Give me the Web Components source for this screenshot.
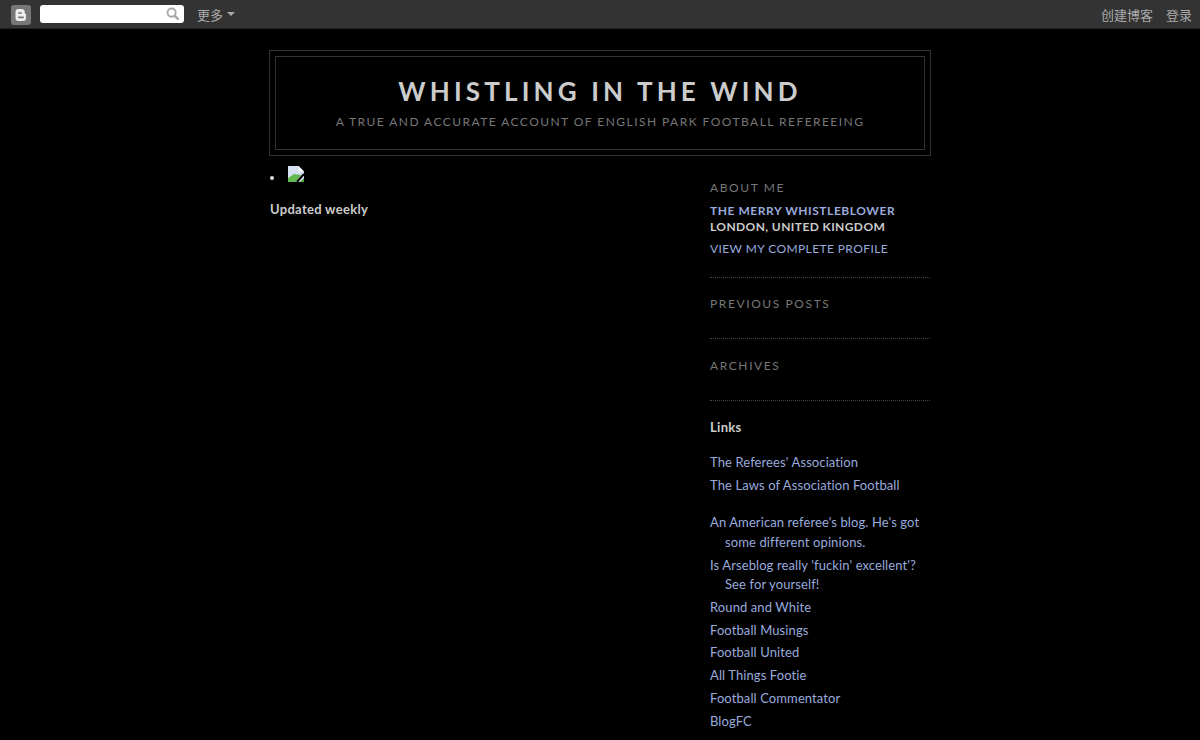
<!DOCTYPE html>
<html>
<head>
<meta charset="utf-8">
<title>Whistling in the Wind</title>
<style>
  html, body { margin: 0; background: #000; height: 100%; overflow: hidden; }
  body { color: #ccc; font: 13px Lato, "Liberation Sans", sans-serif; }
</style>
</head>
<body>
<blog-navbar></blog-navbar>
<blog-page>
  <blog-header slot="header" title-text="Whistling in the Wind" description="A true and accurate account of English park football refereeing"></blog-header>
  <blog-post slot="main">Updated weekly</blog-post>
  <profile-box slot="side" name="The Merry Whistleblower" location="London, United Kingdom" link="View my complete profile"></profile-box>
  <side-section slot="side" heading="Previous Posts" top="18" bottom="26"></side-section>
  <side-section slot="side" heading="Archives" top="19" bottom="26"></side-section>
  <link-group slot="side" heading="Links">
    <blog-link>The Referees' Association</blog-link>
    <blog-link>The Laws of Association Football</blog-link>
    <blog-link top="14.7">An American referee's blog. He's got some different opinions.</blog-link>
    <blog-link>Is Arseblog really 'fuckin' excellent'? See for yourself!</blog-link>
    <blog-link>Round and White</blog-link>
    <blog-link>Football Musings</blog-link>
    <blog-link>Football United</blog-link>
    <blog-link>All Things Footie</blog-link>
    <blog-link>Football Commentator</blog-link>
    <blog-link>BlogFC</blog-link>
  </link-group>
</blog-page>
<script>
const sansStack = 'Lato, "Liberation Sans", sans-serif';

class BlogNavbar extends HTMLElement {
  constructor() {
    super();
    this.attachShadow({ mode: "open" });
    this.shadowRoot.innerHTML = `
      <style>
        :host {
          display: flex;
          align-items: center;
          height: 28px;
          padding: 0 8px 0 11px;
          background: #333;
          border-bottom: 1px solid #222;
          color: #aaa;
          font: 13px "Noto Sans CJK SC", sans-serif;
        }
        .logo { width: 20px; height: 20px; margin: 2px 9px 0 0; }
        .search {
          display: flex;
          justify-content: flex-end;
          align-items: center;
          box-sizing: border-box;
          width: 144px;
          height: 18px;
          padding-right: 4px;
          background: #fff;
          border-radius: 3px;
          margin-right: 13px;
        }
        .more { display: flex; align-items: center; gap: 4px; }
        .more i { border: 4px solid transparent; border-top-color: #aaa; border-bottom: 0; }
        .right { margin-left: auto; display: flex; gap: 13px; }
      </style>
      <svg class="logo" viewBox="0 0 20 20">
        <rect width="20" height="20" rx="3" fill="#777"/>
        <path d="M7.5 4h3.2a3 3 0 0 1 3 3v.8c0 .6.5 1 1 1.1.2.1.3.3.3.6v3.5a3 3 0 0 1-3 3H7.5a3 3 0 0 1-3-3V7a3 3 0 0 1 3-3z" fill="#eee"/>
        <rect x="7" y="7.2" width="4" height="1.6" rx=".8" fill="#777"/>
        <rect x="7" y="11.6" width="6" height="1.6" rx=".8" fill="#777"/>
      </svg>
      <div class="search">
        <svg width="14" height="14" viewBox="0 0 15 15" fill="none" stroke="#a8a8a8">
          <circle cx="6" cy="6" r="4.4" stroke-width="2"/>
          <path d="M9 9l4.5 4.5" stroke-width="2.6"/>
        </svg>
      </div>
      <div class="more">更多<i></i></div>
      <div class="right"><span>创建博客</span><span>登录</span></div>`;
  }
}

class BlogPage extends HTMLElement {
  constructor() {
    super();
    this.attachShadow({ mode: "open" });
    this.shadowRoot.innerHTML = `
      <style>
        :host { display: block; width: 662px; margin: 21px auto 0; }
        .columns { display: flex; justify-content: space-between; padding: 0 1px; margin-top: 10px; }
        .main { width: 410px; }
        .side { width: 220px; }
      </style>
      <slot name="header"></slot>
      <div class="columns">
        <div class="main"><slot name="main"></slot></div>
        <div class="side"><slot name="side"></slot></div>
      </div>`;
  }
}

class BlogHeader extends HTMLElement {
  constructor() {
    super();
    this.attachShadow({ mode: "open" });
    this.shadowRoot.innerHTML = `
      <style>
        :host { display: block; border: 1px solid #333; padding: 5px; height: 94px; }
        .inner {
          height: 92px;
          border: 1px solid #333;
          text-align: center;
          text-transform: uppercase;
          font-family: ${sansStack};
        }
        h1 {
          margin: 19px 0 0;
          color: #ccc;
          font-size: 26px;
          line-height: 30px;
          font-weight: 700;
          letter-spacing: 4.15px;
        }
        p {
          margin: 8px 0 0;
          color: #777;
          font-size: 12px;
          line-height: 16px;
          letter-spacing: 1.45px;
        }
      </style>
      <div class="inner">
        <h1>${this.getAttribute("title-text")}</h1>
        <p>${this.getAttribute("description")}</p>
      </div>`;
  }
}

class BlogPost extends HTMLElement {
  constructor() {
    super();
    this.attachShadow({ mode: "open" });
    this.shadowRoot.innerHTML = `
      <style>
        :host { display: block; color: #ccc; font: 700 13px/18px ${sansStack}; letter-spacing: .3px; }
        ul { margin: 0; padding: 0; list-style: none; height: 34px; }
        li { display: flex; }
        li::before {
          content: "";
          width: 4px;
          height: 4px;
          margin: 9.5px 14px 0 0;
          border-radius: 50%;
          background: #ddd;
        }
        svg { display: block; }
        p { margin: 0; }
      </style>
      <ul><li><svg width="16" height="16" viewBox="0 0 16 16">
        <path d="M0 0h10.5L16 5.5V16H0z" fill="#d6e0f0"/>
        <path d="M10.5 0v5.5H16z" fill="#fff"/>
        <path d="M0 16v-4l6-4 7 1-5 7z" fill="#63b84f"/>
        <path d="M16 8l-7 8" stroke="#000" stroke-width="2" fill="none"/>
        <path d="M12 16l4-4v4z" fill="#4aa53f"/>
      </svg></li></ul>
      <p><slot></slot></p>`;
  }
}

const sideHeading = `
  h2 {
    margin: 0;
    color: #777;
    font: 400 12px/16px ${sansStack};
    letter-spacing: 1.6px;
    text-transform: uppercase;
  }`;

class ProfileBox extends HTMLElement {
  constructor() {
    super();
    this.attachShadow({ mode: "open" });
    this.shadowRoot.innerHTML = `
      <style>
        :host {
          display: block;
          padding: 14px 0 20px;
          border-bottom: 1px dotted #444;
          font-size: 12px;
          text-transform: uppercase;
        }
        ${sideHeading}
        .who { margin-top: 7px; line-height: 16px; font-weight: 700; color: #ccc; letter-spacing: .4px; }
        .name { color: #99aadd; letter-spacing: .55px; }
        .link { margin-top: 6px; line-height: 16px; color: #99aadd; letter-spacing: .4px; }
      </style>
      <h2>About Me</h2>
      <div class="who">
        <div class="name">${this.getAttribute("name")}</div>
        <div>${this.getAttribute("location")}</div>
      </div>
      <div class="link">${this.getAttribute("link")}</div>`;
  }
}

class SideSection extends HTMLElement {
  constructor() {
    super();
    this.attachShadow({ mode: "open" });
    const top = this.getAttribute("top");
    const bottom = this.getAttribute("bottom");
    this.shadowRoot.innerHTML = `
      <style>
        :host { display: block; padding: ${top}px 0 ${bottom}px; border-bottom: 1px dotted #444; }
        ${sideHeading}
      </style>
      <h2>${this.getAttribute("heading")}</h2>`;
  }
}

class LinkGroup extends HTMLElement {
  constructor() {
    super();
    this.attachShadow({ mode: "open" });
    this.shadowRoot.innerHTML = `
      <style>
        :host { display: block; padding-top: 17px; }
        h3 { margin: 0 0 17px; color: #ccc; font: 700 13px/18px ${sansStack}; letter-spacing: .3px; }
      </style>
      <h3>${this.getAttribute("heading")}</h3>
      <slot></slot>`;
  }
}

class BlogLink extends HTMLElement {
  constructor() {
    super();
    this.attachShadow({ mode: "open" });
    const top = this.getAttribute("top") || 0;
    this.shadowRoot.innerHTML = `
      <style>
        :host {
          display: block;
          margin-top: ${top}px;
          padding: 0 0 3.3px 15px;
          text-indent: -15px;
          color: #99aadd;
          font: 13px/19.5px ${sansStack};
          letter-spacing: .1px;
        }
      </style>
      <slot></slot>`;
  }
}

customElements.define("blog-navbar", BlogNavbar);
customElements.define("blog-page", BlogPage);
customElements.define("blog-header", BlogHeader);
customElements.define("blog-post", BlogPost);
customElements.define("profile-box", ProfileBox);
customElements.define("side-section", SideSection);
customElements.define("link-group", LinkGroup);
customElements.define("blog-link", BlogLink);
</script>
</body>
</html>
